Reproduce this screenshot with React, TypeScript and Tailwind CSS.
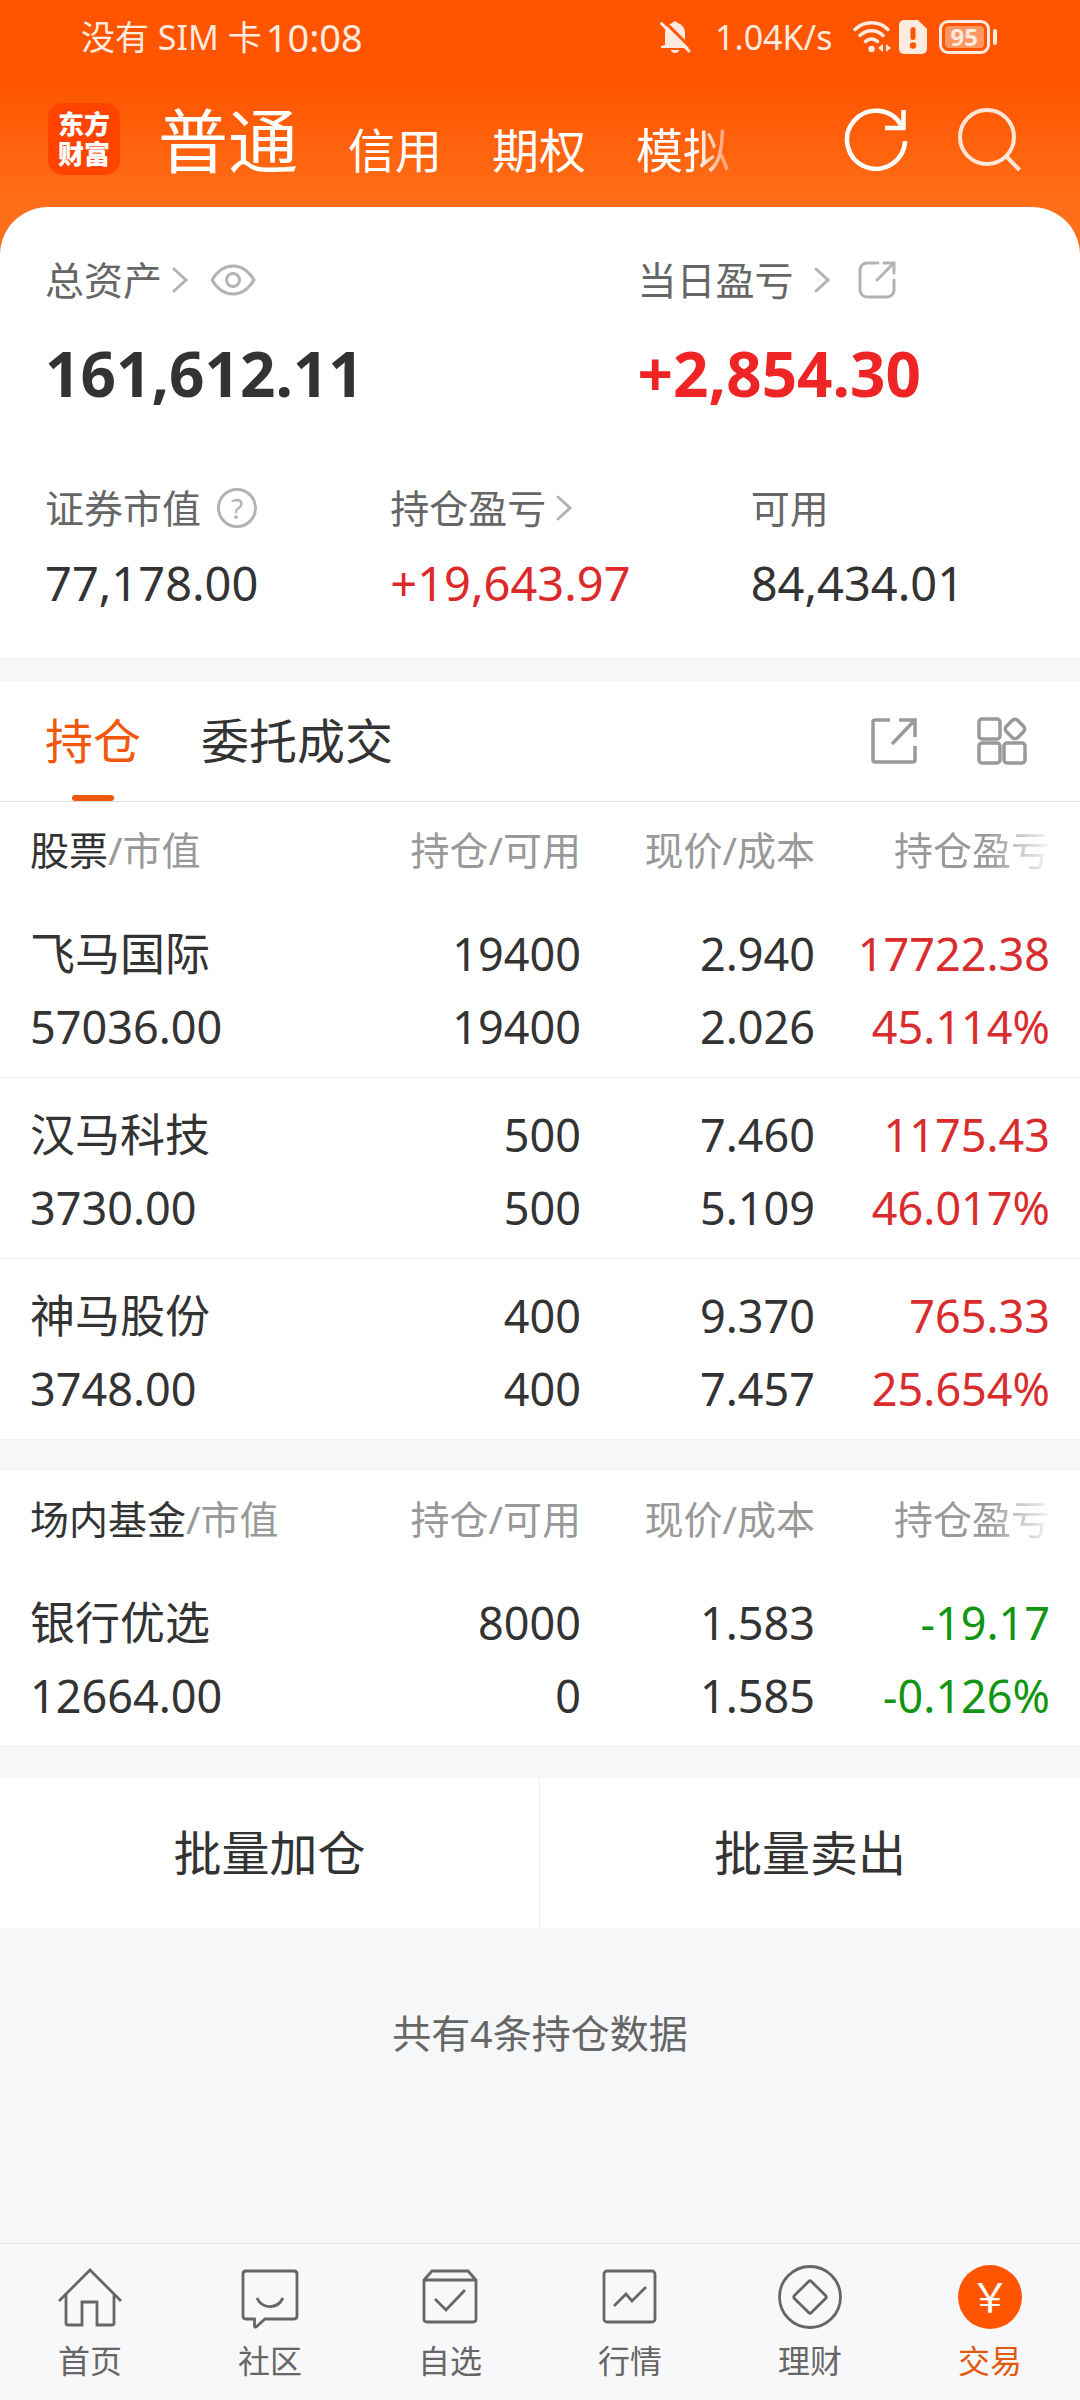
import type React from "react";
import clsx from "clsx";

interface Holding {
  name: string;
  marketValue: string;
  amount: string;
  available: string;
  price: string;
  cost: string;
  profit: string;
  profitRate: string;
}

const stocks: Holding[] = [
  { name: "飞马国际", marketValue: "57036.00", amount: "19400", available: "19400", price: "2.940", cost: "2.026", profit: "17722.38", profitRate: "45.114%" },
  { name: "汉马科技", marketValue: "3730.00", amount: "500", available: "500", price: "7.460", cost: "5.109", profit: "1175.43", profitRate: "46.017%" },
  { name: "神马股份", marketValue: "3748.00", amount: "400", available: "400", price: "9.370", cost: "7.457", profit: "765.33", profitRate: "25.654%" },
];

const funds: Holding[] = [
  { name: "银行优选", marketValue: "12664.00", amount: "8000", available: "0", price: "1.583", cost: "1.585", profit: "-19.17", profitRate: "-0.126%" },
];

const Chevron = () => (
  <svg className="w-4 h-[26px] shrink-0" viewBox="0 0 16 26" fill="none" stroke="#b3b3b3" strokeWidth="3" strokeLinecap="round">
    <path d="M2 2l12 11L2 24" />
  </svg>
);

const StatusBar = () => (
  <div className="flex justify-between items-center pr-[83px] pl-[81px] h-[74px] text-[#ffeadf]">
    <div className="flex items-center gap-1">
      <span className="text-[34px] leading-10">没有 SIM 卡</span>
      <span className="text-[38px] leading-10">10:08</span>
    </div>
    <div className="flex items-center">
      <svg className="w-8 h-8" viewBox="0 0 32 32" fill="currentColor">
        <path d="M6 24V12C6 7 9 3.500 13 2.300 13.500 1 14.700.5 16 .5s2.500.5 3 1.800c4 1.200 7 4.700 7 9.700v9l4 4v2H2v-2z" />
        <path d="M11.500 29h9c-1 2-2.600 3-4.500 3s-3.500-1-4.500-3z" />
        <path d="M5 0l28 28" stroke="#ff5500" strokeWidth="3" />
        <path d="M2.500 2.500L30 30" stroke="currentColor" strokeWidth="3" strokeLinecap="round" />
      </svg>
      <span className="ml-6 text-[34px] leading-10">1.04K/s</span>
      <svg className="ml-5 w-[38px] h-[34px]" viewBox="0 0 38 34" fill="none" stroke="currentColor" strokeWidth="3.500" strokeLinecap="round">
        <path d="M2 9.500c9-9 24-9 33 0M7 15.500c6.500-6.500 16.500-6.500 23 0M12.500 21.500c3.500-3.500 8.500-3.500 12 0" />
        <circle cx="18.500" cy="29" r="3.200" fill="currentColor" stroke="none" />
        <path d="M30 24v8l-5-4zM33 24v8l5-4z" fill="currentColor" stroke="none" />
      </svg>
      <svg className="ml-2 w-7 h-[34px]" viewBox="0 0 28 34">
        <path d="M5 0h14l9 9v20a5 5 0 0 1-5 5H5a5 5 0 0 1-5-5V5a5 5 0 0 1 5-5z" fill="currentColor" />
        <rect x="11.500" y="7" width="5" height="13" rx="2.500" fill="#ff5500" />
        <circle cx="14" cy="25.500" r="3.200" fill="#ff5500" />
      </svg>
      <div className="flex items-center gap-[3px] ml-3">
        <div className="p-[3px] border-[3px] border-current rounded-[9px]">
          <div className="bg-[#ff9763] px-[6px] rounded-[4px] font-bold text-[24px] text-center leading-[22px]">95</div>
        </div>
        <div className="bg-current rounded-full w-1 h-4" />
      </div>
    </div>
  </div>
);

const TopBar = () => (
  <header className="flex items-center pr-[58px] pb-[3px] pl-12 h-[133px] text-white">
    <div className="flex justify-center items-center bg-[#ff4400] rounded-[15px] w-[72px] h-[72px] shrink-0">
      <span className="w-[54px] font-black text-[26px] text-center leading-[30px] break-all">东方财富</span>
    </div>
    <nav className="flex flex-1 items-baseline gap-[50px] ml-[38px] pt-3 text-[47px] leading-[100px] whitespace-nowrap">
      <button className="text-[70px]">普通</button>
      <button>信用</button>
      <button>期权</button>
      <button className="[mask-image:linear-gradient(to_right,black_65%,rgba(0,0,0,0.300))]">模拟</button>
    </nav>
    <div className="flex items-center gap-12">
      <button aria-label="刷新">
        <svg className="block w-16 h-16" viewBox="0 0 64 64" fill="none" stroke="currentColor" strokeWidth="4.500">
          <path d="M61 34A29 29 0 1 1 57 18" />
          <path d="M41 21h18.500V3" />
        </svg>
      </button>
      <button aria-label="搜索" className="text-[#ffe6d6]">
        <svg className="block w-[66px] h-[66px]" viewBox="0 0 66 66" fill="none" stroke="currentColor" strokeWidth="4">
          <circle cx="31" cy="31" r="27" />
          <path d="M50 50l13.500 14" />
        </svg>
      </button>
    </div>
  </header>
);

const labelStyle = "flex items-center text-[39px] text-[#666] leading-[50px]";

const Summary = () => (
  <section className="bg-white pt-12 pr-[46px] pb-11 pl-[45px] rounded-t-[48px]">
    <div className="grid grid-cols-[592fr_396fr]">
      <div>
        <div className={clsx(labelStyle, "gap-[10px]")}>
          总资产
          <Chevron />
          <button aria-label="隐藏资产" className="ml-3">
            <svg className="block w-[46px] h-8" viewBox="0 0 46 32" fill="none" stroke="#b3b3b3" strokeWidth="3">
              <path d="M2 16C8 6 16 2 23 2s15 4 21 14c-6 10-14 14-21 14S8 26 2 16z" />
              <circle cx="23" cy="16" r="6.500" />
            </svg>
          </button>
        </div>
        <p className="mt-7 font-bold text-[#333] text-[62px] leading-[80px]">161,612.11</p>
      </div>
      <div>
        <div className={clsx(labelStyle, "gap-5")}>
          当日盈亏
          <Chevron />
          <button aria-label="分享盈亏" className="ml-2">
            <svg className="block w-[38px] h-[38px]" viewBox="0 0 38 38" fill="none" stroke="#b3b3b3" strokeWidth="3" strokeLinecap="round">
              <path d="M20 2H9a7 7 0 0 0-7 7v20a7 7 0 0 0 7 7h20a7 7 0 0 0 7-7V19" />
              <path d="M26 2h10v10M36 2L19 19" />
            </svg>
          </button>
        </div>
        <p className="mt-7 font-bold text-[#ef2424] text-[62px] leading-[80px]">+2,854.30</p>
      </div>
    </div>
    <div className="grid grid-cols-[345fr_360fr_283fr] mt-[70px]">
      <div>
        <div className={clsx(labelStyle, "gap-4")}>
          证券市值
          <button aria-label="证券市值说明" className="border-[#b3b3b3] border-[3px] rounded-full w-10 h-10 text-[#b3b3b3] text-[28px] leading-[34px]">?</button>
        </div>
        <p className="mt-5 text-[#333] text-[47px] leading-[60px]">77,178.00</p>
      </div>
      <div>
        <div className={clsx(labelStyle, "gap-[10px]")}>
          持仓盈亏
          <Chevron />
        </div>
        <p className="mt-5 text-[#dc2a2a] text-[47px] leading-[60px]">+19,643.97</p>
      </div>
      <div>
        <div className={labelStyle}>可用</div>
        <p className="mt-5 text-[#333] text-[47px] leading-[60px]">84,434.01</p>
      </div>
    </div>
  </section>
);

const HoldingTabs = () => (
  <div className="flex items-stretch bg-white mt-6 pr-[53px] pl-[45px] border-[#e0e0e0] border-b h-[121px] text-[#333] text-[48px]">
    <button className="relative text-[#f0590c]">
      持仓
      <span className="bottom-0 left-1/2 absolute bg-[#f0590c] rounded-full w-[42px] h-[6px] -translate-x-1/2" />
    </button>
    <button className="ml-[60px]">委托成交</button>
    <div className="flex items-center gap-[60px] ml-auto">
      <button aria-label="分享持仓">
        <svg className="block w-[46px] h-[46px]" viewBox="0 0 46 46" fill="none" stroke="#999" strokeWidth="3.500">
          <path d="M19 2H4a2 2 0 0 0-2 2v38a2 2 0 0 0 2 2h38a2 2 0 0 0 2-2V28" />
          <path d="M28 2h16v17M43 3L21 26" />
        </svg>
      </button>
      <button aria-label="更多功能">
        <svg className="block w-[50px] h-12" viewBox="0 0 50 48" fill="none" stroke="#999" strokeWidth="3.500">
          <rect x="2" y="2" width="21" height="20" rx="3" />
          <rect x="2" y="26" width="21" height="20" rx="3" />
          <rect x="27" y="26" width="21" height="20" rx="3" />
          <rect x="30" y="4" width="16" height="16" rx="4" transform="rotate(45 38 12)" />
        </svg>
      </button>
    </div>
  </div>
);

interface HoldingTableProps {
  title: string;
  rows: Holding[];
}

const HoldingTable: React.FC<HoldingTableProps> = ({ title, rows }) => (
  <table className="bg-white w-full text-[#333] text-right table-fixed">
    <thead>
      <tr className="h-[95px] text-[#999] text-[39px] leading-[50px] whitespace-nowrap">
        <th className="pl-[30px] font-normal text-left">
          <span className="text-[#333]">{title}</span>/市值
        </th>
        <th className="w-[235px] font-normal">持仓/可用</th>
        <th className="w-[234px] font-normal">现价/成本</th>
        <th className="pr-[30px] w-[265px] font-normal">
          <span className="[mask-image:linear-gradient(to_right,black_60%,rgba(0,0,0,0.100))]">持仓盈亏</span>
        </th>
      </tr>
    </thead>
    <tbody>
      {rows.map((row) => (
        <tr key={row.name} className="border-[#ececec] border-b text-[45px] leading-[73px]">
          <td className="pt-5 pb-[14px] pl-[30px] text-left">
            <div>{row.name}</div>
            <div>{row.marketValue}</div>
          </td>
          <td className="pt-5 pb-[14px]">
            <div>{row.amount}</div>
            <div>{row.available}</div>
          </td>
          <td className="pt-5 pb-[14px]">
            <div>{row.price}</div>
            <div>{row.cost}</div>
          </td>
          <td className={clsx("pt-5 pr-[30px] pb-[14px]", row.profit.startsWith("-") ? "text-[#129612]" : "text-[#d92d2d]")}>
            <div>{row.profit}</div>
            <div>{row.profitRate}</div>
          </td>
        </tr>
      ))}
    </tbody>
  </table>
);

interface NavItemProps {
  label: string;
  active?: boolean;
  children: React.ReactNode;
}

const NavItem: React.FC<NavItemProps> = ({ label, active, children }) => (
  <a href="#" className={clsx("flex flex-col items-center gap-3", active ? "text-[#e2590f]" : "text-[#666]")}>
    {children}
    <span className="text-[32px] leading-10">{label}</span>
  </a>
);

const NavIcon: React.FC<{ children: React.ReactNode }> = ({ children }) => (
  <svg className="w-16 h-16" viewBox="0 0 64 64" fill="none" stroke="currentColor" strokeWidth="2.800">
    {children}
  </svg>
);

const BottomNav = () => (
  <nav className="grid grid-cols-6 bg-[#f8f8fa] mt-auto pt-[21px] pb-[19px] border-[#e3e3e5] border-t">
    <NavItem label="首页">
      <NavIcon>
        <path d="M1 36L32 5l31 31" />
        <path d="M8 30v28q0 2 2 2h14V37h15v23h15q2 0 2-2V30" />
      </NavIcon>
    </NavItem>
    <NavItem label="社区">
      <NavIcon>
        <path d="M8 6h48q3 0 3 3v42q0 3-3 3H27l-9 8q-1.500.5-1.500-1V54H8q-3 0-3-3V9q0-3 3-3z" />
        <path d="M19 33c5 11 20 12 26 0" />
      </NavIcon>
    </NavItem>
    <NavItem label="自选">
      <NavIcon>
        <path d="M6 15l8-9h36l8 9v39q0 3-3 3H9q-3 0-3-3zM6 15h52" />
        <path d="M17 34l11 11 19-20" />
      </NavIcon>
    </NavItem>
    <NavItem label="行情">
      <NavIcon>
        <rect x="6" y="6" width="51" height="51" rx="3" />
        <path d="M16 41l12-12 6 7 14-14" />
      </NavIcon>
    </NavItem>
    <NavItem label="理财">
      <NavIcon>
        <circle cx="32" cy="32" r="30.500" />
        <rect x="20" y="20" width="24" height="24" rx="2" transform="rotate(45 32 32)" />
      </NavIcon>
    </NavItem>
    <NavItem label="交易" active>
      <span className="bg-[#ff5500] rounded-full w-16 h-16 text-[40px] text-white text-center leading-[64px]">￥</span>
    </NavItem>
  </nav>
);

export default function App() {
  return (
    <div className="flex flex-col bg-[#f6f7f9] min-h-screen font-['Noto_Sans','Noto_Sans_CJK_SC',sans-serif]">
      <div className="bg-[linear-gradient(to_bottom,#ff5500_85px,#ff6f1a_210px)]">
        <StatusBar />
        <TopBar />
        <Summary />
      </div>
      <HoldingTabs />
      <HoldingTable title="股票" rows={stocks} />
      <div className="h-[31px]" />
      <HoldingTable title="场内基金" rows={funds} />
      <div className="grid grid-cols-2 bg-white mt-[31px] h-[150px] text-[#333] text-[48px]">
        <button className="border-[#ececec] border-r">批量加仓</button>
        <button>批量卖出</button>
      </div>
      <p className="mt-20 mb-20 text-[#666] text-[39px] text-center leading-[50px]">共有4条持仓数据</p>
      <BottomNav />
    </div>
  );
}
